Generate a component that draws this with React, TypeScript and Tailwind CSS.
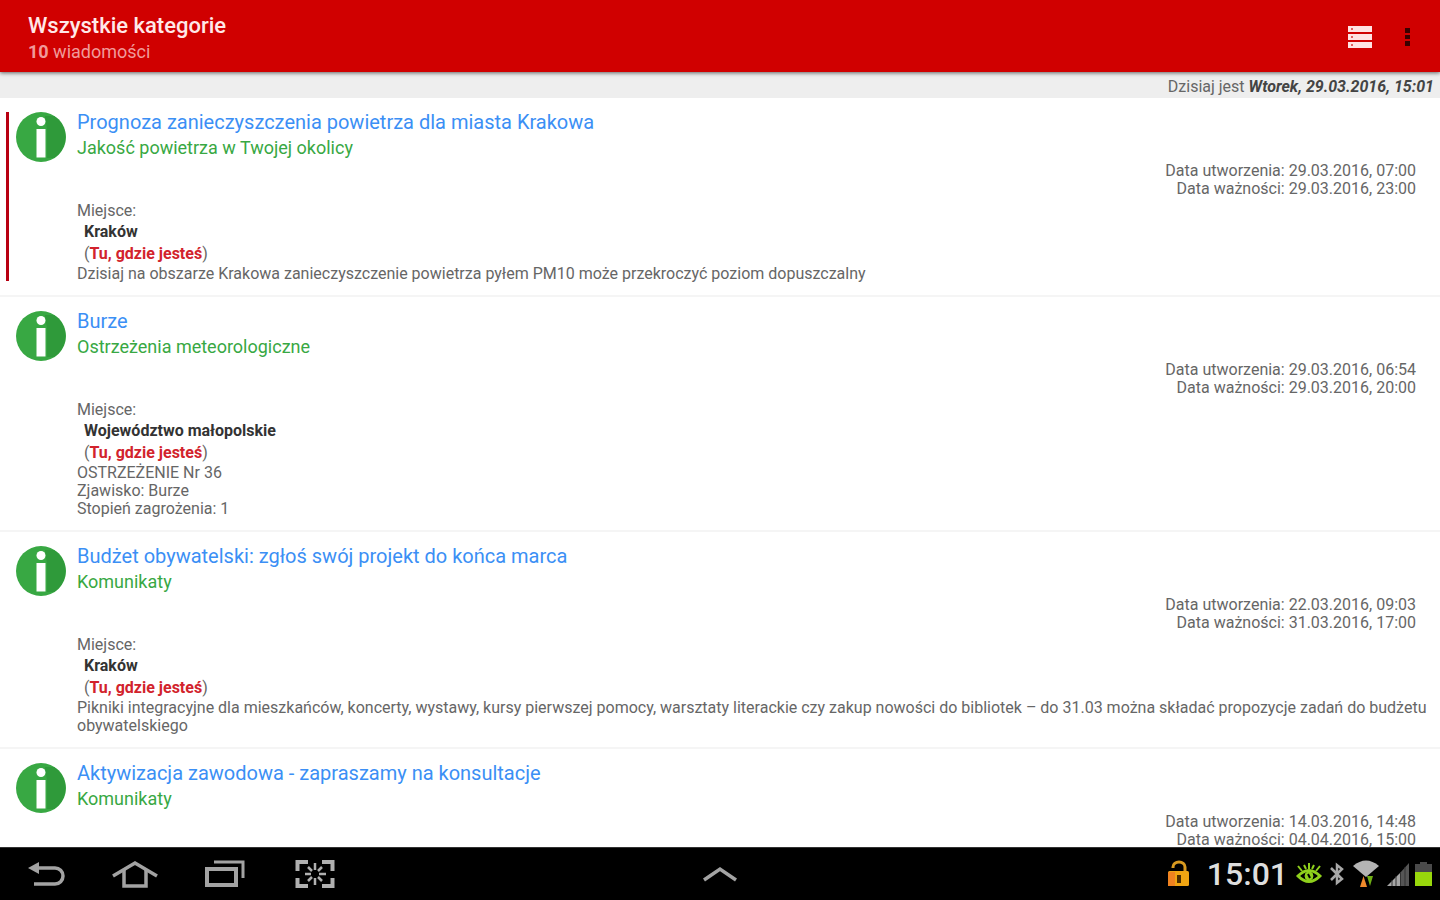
import type { ReactNode } from 'react';

interface Message {
  title: string;
  category: string;
  created: string;
  valid: string;
  place?: string;
  body: string[];
  unread?: boolean;
}

const messages: Message[] = [
  {
    title: 'Prognoza zanieczyszczenia powietrza dla miasta Krakowa',
    category: 'Jakość powietrza w Twojej okolicy',
    created: '29.03.2016, 07:00',
    valid: '29.03.2016, 23:00',
    place: 'Kraków',
    body: ['Dzisiaj na obszarze Krakowa zanieczyszczenie powietrza pyłem PM10 może przekroczyć poziom dopuszczalny'],
    unread: true,
  },
  {
    title: 'Burze',
    category: 'Ostrzeżenia meteorologiczne',
    created: '29.03.2016, 06:54',
    valid: '29.03.2016, 20:00',
    place: 'Województwo małopolskie',
    body: ['OSTRZEŻENIE Nr 36', 'Zjawisko: Burze', 'Stopień zagrożenia: 1'],
  },
  {
    title: 'Budżet obywatelski: zgłoś swój projekt do końca marca',
    category: 'Komunikaty',
    created: '22.03.2016, 09:03',
    valid: '31.03.2016, 17:00',
    place: 'Kraków',
    body: [
      'Pikniki integracyjne dla mieszkańców, koncerty, wystawy, kursy pierwszej pomocy, warsztaty literackie czy zakup nowości do bibliotek – do 31.03 można składać propozycje zadań do budżetu obywatelskiego',
    ],
  },
  {
    title: 'Aktywizacja zawodowa - zapraszamy na konsultacje',
    category: 'Komunikaty',
    created: '14.03.2016, 14:48',
    valid: '04.04.2016, 15:00',
    body: [],
  },
];

function InfoIcon() {
  return (
    <svg viewBox="0 0 50 50" className="mt-[3px] size-[50px] shrink-0" aria-hidden="true">
      <circle cx="25" cy="25" r="25" fill="#38a843" />
      <path d="M29 6 L31 17 V46 H38 A25 25 0 0 0 38 4 H29Z" fill="#2f9a3a" />
      <circle cx="25" cy="9.500" r="4.500" fill="#fff" />
      <path d="M20.500 17H29.500V45.500H20.500Z" fill="#fff" />
    </svg>
  );
}

function MessageRow({ message }: { message: Message }) {
  return (
    <li className="flex border-b-2 border-[#f5f5f5] pt-[11px] pb-3 pl-1.5 pr-3">
      <div className={`mt-[3px] mb-0.5 w-[3px] shrink-0 ${message.unread ? 'bg-[#b80012]' : ''}`} />
      <div className="ml-[7px] flex min-w-0 grow gap-[11px]">
        <InfoIcon />
        <div className="min-w-0 grow">
          <h2 className="text-xl leading-[26px]">
            <a href="#" className="text-[#3b8ff5]">{message.title}</a>
          </h2>
          <p className="text-lg leading-[26px] text-[#38a843]">{message.category}</p>
          <div className="mt-px pr-3 text-right">
            <p>Data utworzenia: {message.created}</p>
            <p>Data ważności: {message.valid}</p>
          </div>
          {message.place && (
            <>
              <p className="mt-0.5 leading-[21px]">Miejsce:</p>
              <p className="pl-[7px] leading-[22px] font-bold text-[#333]">{message.place}</p>
              <p className="pl-[7px] leading-[22px]">
                (<b className="text-[#d2232c]">Tu, gdzie jesteś</b>)
              </p>
            </>
          )}
          {message.body.map((line) => (
            <p key={line}>{line}</p>
          ))}
        </div>
      </div>
    </li>
  );
}

function NavButton({ label, children }: { label: string; children: ReactNode }) {
  return (
    <button type="button" aria-label={label} className="flex w-[90px] justify-center">
      {children}
    </button>
  );
}

function SystemBar() {
  return (
    <nav className="grid h-[53px] shrink-0 grid-cols-[1fr_auto_1fr] items-center border-t border-[#333] bg-black">
      <div className="flex items-center">
        <NavButton label="Wstecz">
          <svg width="42" height="32" viewBox="0 0 42 32" fill="none" stroke="#a3a3a3" strokeWidth="3.500">
            <path d="M12 10H31A8 8 0 0 1 31 26H10" />
            <path d="M4 10L15 4V16Z" fill="#a3a3a3" stroke="none" />
          </svg>
        </NavButton>
        <NavButton label="Ekran główny">
          <svg width="48" height="32" viewBox="0 0 48 32" fill="none" stroke="#a3a3a3" strokeWidth="3.500">
            <path d="M2 18L24 5L46 18" />
            <path d="M13 12V28H35V12" />
          </svg>
        </NavButton>
        <NavButton label="Ostatnie aplikacje">
          <svg width="42" height="32" viewBox="0 0 42 32" fill="none" stroke="#a3a3a3">
            <path d="M3 11H32V27H3Z" strokeWidth="4" />
            <path d="M10 4H39V20" strokeWidth="3" />
          </svg>
        </NavButton>
        <NavButton label="Zrzut ekranu">
          <svg width="40" height="32" viewBox="0 0 40 32" fill="none" stroke="#b0b0b0">
            <path d="M2.500 13V4H13M27 4H37.500V13M37.500 20V28H27M13 28H2.500V20" strokeWidth="4" />
            <path d="M20 5V12M20 20V27M10 16H16M24 16H31M13 9L17 13M27 9L23 13M13 23L17 19M27 23L23 19" strokeWidth="2.500" />
          </svg>
        </NavButton>
      </div>
      <button type="button" aria-label="Pokaż panel" className="flex">
        <svg width="36" height="18" viewBox="0 0 36 18" fill="none" stroke="#a3a3a3" strokeWidth="3.500">
          <path d="M2 15L18 4L34 15" />
        </svg>
      </button>
      <div className="flex items-center justify-end pr-2">
        <svg width="24" height="28" viewBox="0 0 24 28" aria-hidden="true">
          <path d="M6 8V7A6 5 0 0 1 18 7V12" fill="none" stroke="#d89a20" strokeWidth="3" />
          <rect x="1" y="11" width="21" height="15" rx="1.500" fill="#f0a512" />
          <path d="M1 12H8V26H1Z" fill="#ef8220" />
          <path d="M10 15H14V23H10Z" fill="#4a2c00" />
        </svg>
        <time className="ml-4 text-[32px] leading-10 font-medium text-[#dedede]">15:01</time>
        <svg width="26" height="26" viewBox="0 0 26 26" className="ml-2" fill="none" stroke="#8fd01c" aria-hidden="true">
          <path d="M2 15Q13 4 24 15Q13 26 2 15Z" strokeWidth="3" />
          <circle cx="13" cy="15" r="4" fill="#8fd01c" />
          <path d="M12 13L14 17" stroke="#000" strokeWidth="2" />
          <path d="M2 5L6 10M8 4L10 8M13 2V8M18 4L16 8M24 5L20 10" strokeWidth="2" />
        </svg>
        <svg width="15" height="24" viewBox="0 0 15 24" className="ml-2" fill="none" stroke="#a8a8a8" strokeWidth="2.500" aria-hidden="true">
          <path d="M1 6L12 17L7 21V3L12 7L1 18" />
        </svg>
        <svg width="26" height="30" viewBox="0 0 26 30" className="ml-2 mb-0.5" aria-hidden="true">
          <path d="M0 8Q13 -3 26 8L13 19Z" fill="#b4b4b4" />
          <path d="M7 29L10.500 18L14 29Z" fill="#f08a2c" />
          <path d="M14 18H20L17 28Z" fill="#6fae14" />
        </svg>
        <svg width="22" height="24" viewBox="0 0 22 24" className="ml-2" aria-hidden="true">
          <path d="M0 24L13 11V24Z" fill="#a5a5a5" />
          <path d="M13 11L22 1V24H13Z" fill="#555" />
          <path d="M5 18V24M9 14V24M13.500 10V24M18 5V24" stroke="#333" />
        </svg>
        <svg width="17" height="26" viewBox="0 0 17 26" className="ml-1.5" aria-hidden="true">
          <path d="M5 1H12V3H17V11H0V3H5Z" fill="#4a4a4a" />
          <path d="M0 11H17V25H0Z" fill="#98d70c" />
        </svg>
      </div>
    </nav>
  );
}

export default function App() {
  return (
    <div className="flex h-screen flex-col overflow-hidden bg-white font-['Roboto',sans-serif] text-base leading-[18px] text-[#666]">
      <header className="relative flex shrink-0 items-center justify-between bg-[#d00000] pt-3 pb-2 pl-7 pr-4 shadow-[0_1px_4px_rgba(0,0,0,0.6)]">
        <div>
          <h1 className="text-[22px] leading-7 font-medium text-[#ffe8e8]">Wszystkie kategorie</h1>
          <p className="text-lg leading-6 text-[#f09a9a]">
            <b>10</b> wiadomości
          </p>
        </div>
        <div className="flex items-center gap-5">
          <button type="button" aria-label="Lista kategorii">
            <svg width="24" height="24" viewBox="0 0 24 24" fill="#ffe3e3">
              <path d="M0 0H24V6H0ZM0 8H24V14H0ZM0 16H24V22H0Z" />
              <path d="M3 2H5V4H3ZM3 10H5V12H3ZM3 18H5V20H3Z" fill="#e06060" />
            </svg>
          </button>
          <button type="button" aria-label="Więcej opcji" className="flex w-8 justify-center">
            <svg width="6" height="20" viewBox="0 0 6 20" fill="#3a0000">
              <path d="M0 0H5V5H0ZM0 7H5V11H0ZM0 13H5V18H0Z" />
            </svg>
          </button>
        </div>
      </header>
      <p className="shrink-0 bg-[#eeeeee] pt-1.5 pb-0.5 pr-1.5 text-right">
        Dzisiaj jest <b className="italic text-[#444]">Wtorek, 29.03.2016, 15:01</b>
      </p>
      <main className="min-h-0 grow overflow-hidden">
        <ul>
          {messages.map((message) => (
            <MessageRow key={message.title} message={message} />
          ))}
        </ul>
      </main>
      <SystemBar />
    </div>
  );
}
